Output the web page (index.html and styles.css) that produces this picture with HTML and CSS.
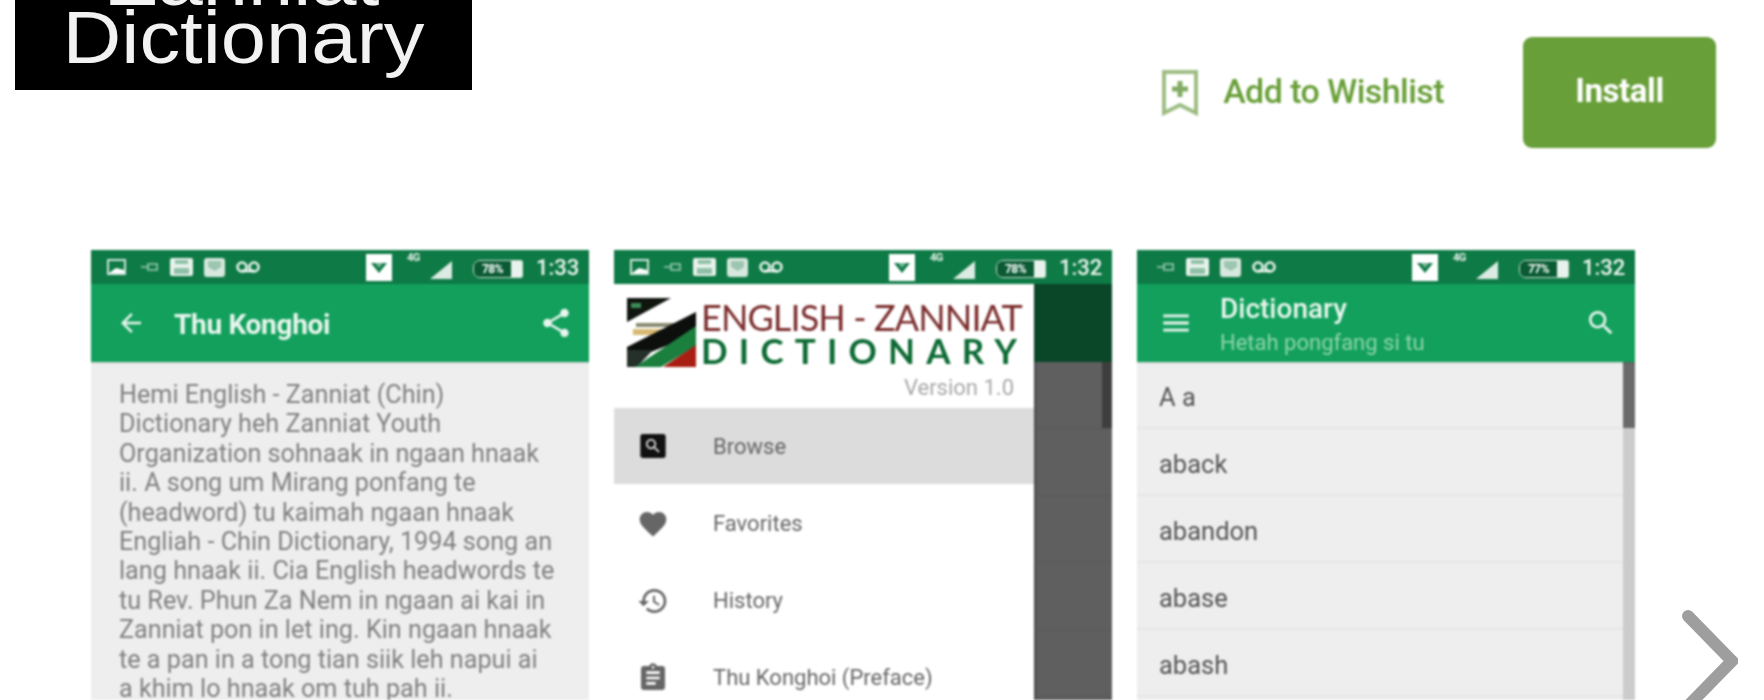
FILE: index.html
```html
<!DOCTYPE html>
<html>
<head>
  <title>Zanniat Dictionary</title>
  <meta name="viewport" content="width=device-width, initial-scale=1.0">
  <link rel="stylesheet" href="styles.css">
</head>
<body>
  <svg class="sprites" xmlns="http://www.w3.org/2000/svg">
    <symbol id="st-pic" viewBox="0 0 19 16">
      <path d="M1 1h17v14H1z" fill="none" stroke="#fff" stroke-width="2" opacity=".8"/>
      <path d="M2 14l7-5 8 2v3z" fill="#fff"/>
    </symbol>
    <symbol id="st-key" viewBox="0 0 19 16">
      <path d="M1 8h7M8 5h9v6H8z" fill="none" stroke="#fff" stroke-width="1.6" opacity=".6"/>
    </symbol>
    <symbol id="st-save" viewBox="0 0 23 18">
      <rect width="23" height="18" rx="2" fill="#e8f2ec"/>
      <path d="M5 2h13v4H5zM4 10h15v6H4z" fill="#8fc0a6"/>
    </symbol>
    <symbol id="st-msg" viewBox="0 0 21 19">
      <rect width="21" height="19" rx="3" fill="#d8e8df"/>
      <path d="M4 3h13v6l-6 4-7-4z" fill="#9cc6b0"/>
    </symbol>
    <symbol id="st-vm" viewBox="0 0 24 14">
      <circle cx="6" cy="7" r="4.500" fill="none" stroke="#fff" stroke-width="2.6" opacity=".9"/>
      <circle cx="18" cy="7" r="4.500" fill="none" stroke="#fff" stroke-width="2.6" opacity=".9"/>
      <path d="M6 11h12" stroke="#fff" stroke-width="2.6" opacity=".9"/>
    </symbol>
    <symbol id="st-wifi" viewBox="0 0 26 27">
      <rect width="26" height="27" fill="#fff"/>
      <path d="M5 9h16l-8 10z" fill="#0f7a46"/>
      <path d="M9 9h8l-4 5z" fill="#7cb598"/>
    </symbol>
    <symbol id="st-signal" viewBox="0 0 22 18">
      <path d="M22 0v18H0z" fill="#fff" opacity=".85"/>
    </symbol>
    <symbol id="i-search" viewBox="0 0 24 24">
      <path d="M15.500 14h-.79l-.28-.27C15.410 12.590 16 11.110 16 9.500 16 5.910 13.090 3 9.500 3S3 5.910 3 9.500 5.910 16 9.500 16c1.610 0 3.090-.59 4.230-1.570l.27.28v.79l5 4.990L20.490 19l-4.990-5zm-6 0C7.010 14 5 11.990 5 9.500S7.010 5 9.500 5 14 7.010 14 9.500 11.990 14 9.500 14z"/>
    </symbol>
  </svg>

  <header class="top">
    <div class="banner">
      <div class="banner-text">Zanniat<br>Dictionary</div>
    </div>
    <div class="actions">
      <a class="wishlist" href="#">
        <svg class="wish-icon" viewBox="0 0 36 46">
          <path d="M2 2h32v41l-16-8-16 8z" fill="none" stroke="#9dbd85" stroke-width="4"/>
          <path d="M15.500 11h5v5.500h5.500v5h-5.500v5.500h-5v-5.500h-5.500v-5h5.500z" fill="#82ac62"/>
        </svg>
        <span class="wish-label">Add to Wishlist</span>
      </a>
      <a class="install" href="#">Install</a>
    </div>
  </header>

  <main class="gallery">
    <section class="shot">
      <div class="statusbar">
        <svg class="st st-pic"><use href="#st-pic"/></svg>
        <svg class="st st-key"><use href="#st-key"/></svg>
        <svg class="st st-save"><use href="#st-save"/></svg>
        <svg class="st st-msg"><use href="#st-msg"/></svg>
        <svg class="st st-vm"><use href="#st-vm"/></svg>
        <div class="st-right">
          <svg class="st st-wifi"><use href="#st-wifi"/></svg>
          <span class="st-net">4G</span>
          <svg class="st st-signal"><use href="#st-signal"/></svg>
          <span class="batt"><span class="batt-level">78%</span><span class="batt-plug"></span></span>
          <span class="st-time">1:33</span>
        </div>
      </div>
      <div class="toolbar">
        <svg class="tb-back" viewBox="0 0 24 24"><path d="M20 11H7.830l5.590-5.590L12 4l-8 8 8 8 1.410-1.410L7.830 13H20v-2z"/></svg>
        <div class="tb-title">Thu Konghoi</div>
        <svg class="tb-share" viewBox="0 0 24 24"><path d="M18 16.080c-.76 0-1.440.3-1.960.77L8.910 12.700c.05-.23.09-.46.09-.7s-.04-.47-.09-.7l7.050-4.110c.54.5 1.250.81 2.040.81 1.660 0 3-1.340 3-3s-1.340-3-3-3-3 1.340-3 3c0 .24.04.47.09.7L8.040 9.810C7.500 9.310 6.790 9 6 9c-1.660 0-3 1.340-3 3s1.340 3 3 3c.79 0 1.500-.31 2.040-.81l7.120 4.160c-.05.21-.08.43-.08.65 0 1.610 1.310 2.920 2.920 2.920 1.610 0 2.920-1.310 2.920-2.920s-1.310-2.920-2.920-2.920z"/></svg>
      </div>
      <p class="preface">Hemi English - Zanniat (Chin)<br>Dictionary heh Zanniat Youth<br>Organization sohnaak in ngaan hnaak<br>ii. A song um Mirang ponfang te<br>(headword) tu kaimah ngaan hnaak<br>Engliah - Chin Dictionary, 1994 song an<br>lang hnaak ii. Cia English headwords te<br>tu Rev. Phun Za Nem in ngaan ai kai in<br>Zanniat pon in let ing. Kin ngaan hnaak<br>te a pan in a tong tian siik leh napui ai<br>a khim lo hnaak om tuh pah ii.</p>
    </section>

    <section class="shot">
      <div class="statusbar">
        <svg class="st st-pic"><use href="#st-pic"/></svg>
        <svg class="st st-key"><use href="#st-key"/></svg>
        <svg class="st st-save"><use href="#st-save"/></svg>
        <svg class="st st-msg"><use href="#st-msg"/></svg>
        <svg class="st st-vm"><use href="#st-vm"/></svg>
        <div class="st-right">
          <svg class="st st-wifi"><use href="#st-wifi"/></svg>
          <span class="st-net">4G</span>
          <svg class="st st-signal"><use href="#st-signal"/></svg>
          <span class="batt"><span class="batt-level">78%</span><span class="batt-plug"></span></span>
          <span class="st-time">1:32</span>
        </div>
      </div>
      <div class="drawer-wrap">
        <nav class="drawer">
          <div class="drawer-head">
            <div class="brand">
              <svg class="brand-logo" viewBox="0 0 69 69">
                <path d="M0 0h44L0 24z" fill="#10160f"/>
                <path d="M4 5h10v5H4z" fill="#3c8a55"/>
                <path d="M9 25h50v4H9z" fill="#8a8a70"/>
                <path d="M6 31h46v6H6z" fill="#d8ba74"/>
                <path d="M0 49L69 14v22L14 58H0z" fill="#0c0f0c"/>
                <path d="M0 52h26L10 69H0z" fill="#26302a"/>
                <path d="M69 28v20L34 69H8z" fill="#1b7f3e"/>
                <path d="M69 47v22H36z" fill="#a81e12"/>
              </svg>
              <div class="brand-text">
                <div class="brand-en">ENGLISH - ZANNIAT</div>
                <div class="brand-dict">DICTIONARY</div>
              </div>
            </div>
            <div class="version">Version 1.0</div>
          </div>
          <div class="drawer-item selected">
            <svg class="di-icon" viewBox="0 0 24 24"><rect x="2.500" y="3" width="19" height="18" rx="2" fill="#111"/><svg x="5" y="5" width="14" height="14" viewBox="0 0 24 24" fill="#eee"><use href="#i-search"/></svg></svg>
            <span>Browse</span>
          </div>
          <div class="drawer-item">
            <svg class="di-icon" viewBox="0 0 24 24"><path d="M12 21.350l-1.450-1.320C5.400 15.360 2 12.280 2 8.500 2 5.420 4.420 3 7.500 3c1.740 0 3.410.81 4.500 2.090C13.090 3.810 14.760 3 16.500 3 19.580 3 22 5.420 22 8.500c0 3.780-3.400 6.860-8.550 11.540L12 21.350z"/></svg>
            <span>Favorites</span>
          </div>
          <div class="drawer-item">
            <svg class="di-icon" viewBox="0 0 24 24"><path d="M13 3c-4.970 0-9 4.030-9 9H1l3.890 3.890.07.14L9 12H6c0-3.870 3.130-7 7-7s7 3.130 7 7-3.130 7-7 7c-1.930 0-3.680-.79-4.940-2.060l-1.420 1.420C8.270 19.990 10.510 21 13 21c4.970 0 9-4.030 9-9s-4.030-9-9-9zm-1 5v5l4.280 2.540.72-1.210-3.500-2.080V8H12z"/></svg>
            <span>History</span>
          </div>
          <div class="drawer-item">
            <svg class="di-icon" viewBox="0 0 24 24"><path d="M19 3h-4.180C14.400 1.840 13.300 1 12 1c-1.300 0-2.400.84-2.820 2H5c-1.100 0-2 .9-2 2v14c0 1.100.9 2 2 2h14c1.100 0 2-.9 2-2V5c0-1.100-.9-2-2-2zm-7 0c.55 0 1 .45 1 1s-.45 1-1 1-1-.45-1-1 .45-1 1-1zm2 14H7v-2h7v2zm3-4H7v-2h10v2zm0-4H7V7h10v2z"/></svg>
            <span>Thu Konghoi (Preface)</span>
          </div>
        </nav>
        <div class="scrim">
          <div class="scrim-bar"></div>
          <div class="scrim-row"><div class="scrim-thumb"></div></div>
          <div class="scrim-row"></div>
          <div class="scrim-row"></div>
          <div class="scrim-row"></div>
          <div class="scrim-row"></div>
        </div>
      </div>
    </section>

    <section class="shot">
      <div class="statusbar">
        <svg class="st st-key"><use href="#st-key"/></svg>
        <svg class="st st-save"><use href="#st-save"/></svg>
        <svg class="st st-msg"><use href="#st-msg"/></svg>
        <svg class="st st-vm"><use href="#st-vm"/></svg>
        <div class="st-right">
          <svg class="st st-wifi"><use href="#st-wifi"/></svg>
          <span class="st-net">4G</span>
          <svg class="st st-signal"><use href="#st-signal"/></svg>
          <span class="batt"><span class="batt-level">77%</span><span class="batt-plug"></span></span>
          <span class="st-time">1:32</span>
        </div>
      </div>
      <div class="toolbar">
        <svg class="tb-menu" viewBox="0 0 24 24"><path d="M3 18h18v-2H3v2zm0-5h18v-2H3v2zm0-7v2h18V6H3z"/></svg>
        <div class="tb-titles">
          <div class="tb-title">Dictionary</div>
          <div class="tb-sub">Hetah pongfang si tu</div>
        </div>
        <svg class="tb-search" viewBox="0 0 24 24"><use href="#i-search"/></svg>
      </div>
      <div class="wordlist">
        <ul class="words">
          <li>A a</li>
          <li>aback</li>
          <li>abandon</li>
          <li>abase</li>
          <li>abash</li>
        </ul>
        <div class="scroll-track"><div class="scroll-thumb"></div></div>
      </div>
    </section>

    <svg class="next" viewBox="0 0 56 102"><path d="M6 6l44 45-44 45" fill="none" stroke="#9e9e9e" stroke-width="12" stroke-linecap="round" stroke-linejoin="miter"/></svg>
  </main>
</body>
</html>
```

FILE: styles.css
```css
html, body {
  margin: 0;
  padding: 0;
  height: 700px;
  overflow: hidden;
  background: white;
}
body {
  font-family: Roboto, "Liberation Sans", sans-serif;
  color: #333;
}
.sprites {
  display: none;
}

/* top row */
.top {
  display: flex;
  justify-content: space-between;
  align-items: flex-start;
  height: 148px;
}
.banner {
  width: 457px;
  height: 90px;
  margin-left: 15px;
  background: black;
  overflow: hidden;
  display: flex;
  flex-direction: column;
  justify-content: flex-end;
  flex-shrink: 0;
}
.banner-text {
  font-family: "Liberation Sans", Arial, sans-serif;
  font-size: 74px;
  line-height: 58px;
  padding-bottom: 23px;
  color: #f2f2f2;
  text-align: center;
  transform: scaleX(1.1);
  filter: blur(.6px);
}
.actions {
  display: flex;
  align-items: center;
  margin-top: 37px;
  margin-right: 48px;
  filter: blur(.8px);
}
.wishlist {
  display: flex;
  align-items: center;
  gap: 25px;
  color: #689f38;
  text-decoration: none;
  margin-right: 79px;
}
.wish-icon {
  width: 36px;
  height: 46px;
}
.wish-label {
  font-size: 34px;
  font-weight: 500;
  letter-spacing: -.55px;
  padding-bottom: 4px;
}
.install {
  width: 193px;
  height: 111px;
  box-sizing: border-box;
  padding-bottom: 4px;
  display: flex;
  align-items: center;
  justify-content: center;
  background-color: #689f38;
  border-radius: 9px;
  color: white;
  font-size: 33px;
  font-weight: 700;
  text-decoration: none;
  letter-spacing: -.4px;
}

/* screenshots */
.gallery {
  display: flex;
  align-items: flex-start;
  gap: 25px;
  margin-top: 102px;
  padding-left: 91px;
  height: 450px;
}
.shot {
  width: 498px;
  height: 450px;
  flex-shrink: 0;
  overflow: hidden;
  background: #eee;
  filter: blur(.8px);
}
.next {
  width: 56px;
  height: 102px;
  margin-left: 22px;
  margin-top: 360px;
  flex-shrink: 0;
  filter: blur(.4px);
}

/* status bar */
.statusbar {
  height: 34px;
  background-color: #0e7a45;
  display: flex;
  align-items: center;
  gap: 11px;
  padding: 0 9px 0 16px;
  box-sizing: border-box;
}
.st {
  display: block;
  flex-shrink: 0;
}
.st-pic { width: 19px; height: 16px; }
.st-key { width: 19px; height: 16px; margin-left: 3px; }
.st-save { width: 23px; height: 18px; }
.st-msg { width: 21px; height: 19px; }
.st-vm { width: 24px; height: 14px; }
.st-right {
  display: flex;
  align-items: center;
  margin-left: auto;
  width: 214px;
}
.st-wifi { width: 26px; height: 27px; }
.st-net {
  width: 14px;
  margin: -20px 0 0 15px;
  font-size: 11px;
  font-weight: 700;
  letter-spacing: -.5px;
  color: #e8f2ec;
}
.st-signal { width: 22px; height: 18px; margin: 6px 0 0 9px; }
.batt {
  display: flex;
  align-items: center;
  width: 50px;
  height: 18px;
  margin: 4px 0 0 21px;
  border: 1px solid #cfe2d7;
  border-radius: 7px 2px 2px 7px;
  box-sizing: border-box;
  overflow: hidden;
}
.batt-level {
  flex: 1;
  text-align: center;
  font-size: 12px;
  font-weight: 700;
  letter-spacing: -.5px;
  color: white;
  background: #0a5a33;
  line-height: 16px;
}
.batt-plug {
  width: 11px;
  height: 16px;
  background: #e8f2ec;
}
.st-time {
  margin: 1px 0 0 13px;
  color: #f0f7f3;
  font-size: 22px;
  font-weight: 500;
}

/* toolbar */
.toolbar {
  height: 78px;
  background-color: #12a05c;
  display: flex;
  align-items: center;
  color: #e9f6ef;
  fill: #e9f6ef;
  box-shadow: 0 1px 2px rgba(0,0,0,0.15);
  position: relative;
}
.tb-back {
  width: 30px;
  height: 30px;
  margin-left: 25px;
}
.tb-title {
  font-size: 28px;
  font-weight: 500;
}
.toolbar > .tb-title {
  margin-left: 28px;
  padding-top: 2px;
  font-weight: 700;
  letter-spacing: -.3px;
}
.tb-share {
  width: 34px;
  height: 34px;
  margin-left: auto;
  margin-right: 16px;
}
.tb-menu {
  width: 34px;
  height: 34px;
  margin-left: 22px;
}
.tb-titles {
  margin-left: 27px;
  padding-top: 2px;
  line-height: 1;
}
.tb-sub {
  margin-top: 9px;
  font-size: 22px;
  color: #90d4ae;
}
.tb-search {
  width: 32px;
  height: 32px;
  margin-left: auto;
  margin-right: 18px;
}

/* preface text */
.preface {
  margin: 0;
  padding: 18px 0 0 28px;
  font-size: 25.2px;
  line-height: 29.4px;
  color: #808080;
  white-space: nowrap;
}

/* drawer */
.drawer-wrap {
  display: flex;
  height: 416px;
}
.drawer {
  width: 420px;
  flex-shrink: 0;
  background: white;
}
.drawer-head {
  height: 124px;
  padding: 14px 20px 0 13px;
  box-sizing: border-box;
}
.brand {
  display: flex;
  gap: 5px;
}
.brand-logo {
  width: 69px;
  height: 69px;
  flex-shrink: 0;
}
.brand-text {
  font-family: Lato, "Liberation Sans", sans-serif;
  padding-top: 1px;
}
.brand-en {
  font-size: 36px;
  line-height: 36px;
  letter-spacing: -.9px;
  color: #7b2c2c;
  white-space: nowrap;
}
.brand-dict {
  font-size: 35px;
  line-height: 30px;
  font-weight: 700;
  letter-spacing: 11.2px;
  color: #0d6b34;
  white-space: nowrap;
}
.version {
  margin-top: 8px;
  text-align: right;
  font-size: 22px;
  color: #a8a8a8;
}
.drawer-item {
  height: 77px;
  display: flex;
  align-items: center;
  font-size: 22px;
  color: #666;
  fill: #666;
}
.drawer-item.selected {
  height: 76px;
  background-color: #dcdcdc;
  margin-bottom: 1px;
}
.di-icon {
  width: 32px;
  height: 32px;
  margin: 0 44px 0 23px;
  flex-shrink: 0;
}
.scrim {
  flex: 1;
  background-color: #5f5f5f;
  box-shadow: inset 2px 0 2px rgba(0,0,0,0.2);
}
.scrim-bar {
  height: 78px;
  background-color: #0a4628;
}
.scrim-row {
  height: 67px;
  box-sizing: border-box;
  border-bottom: 1px solid #585858;
  display: flex;
  justify-content: flex-end;
}
.scrim-thumb {
  width: 10px;
  height: 66px;
  background: #3e3e3e;
}

/* word list */
.wordlist {
  display: flex;
  height: 338px;
}
.words {
  flex: 1;
  margin: 0;
  padding: 0;
  list-style: none;
}
.words li {
  height: 67px;
  box-sizing: border-box;
  border-bottom: 2px solid #e6e6e6;
  padding: 4px 0 0 22px;
  display: flex;
  align-items: center;
  font-size: 25.5px;
  color: #555;
}
.scroll-track {
  width: 12px;
  background-color: #ccc;
}
.scroll-thumb {
  height: 66px;
  background-color: #6a6a6a;
}
```
